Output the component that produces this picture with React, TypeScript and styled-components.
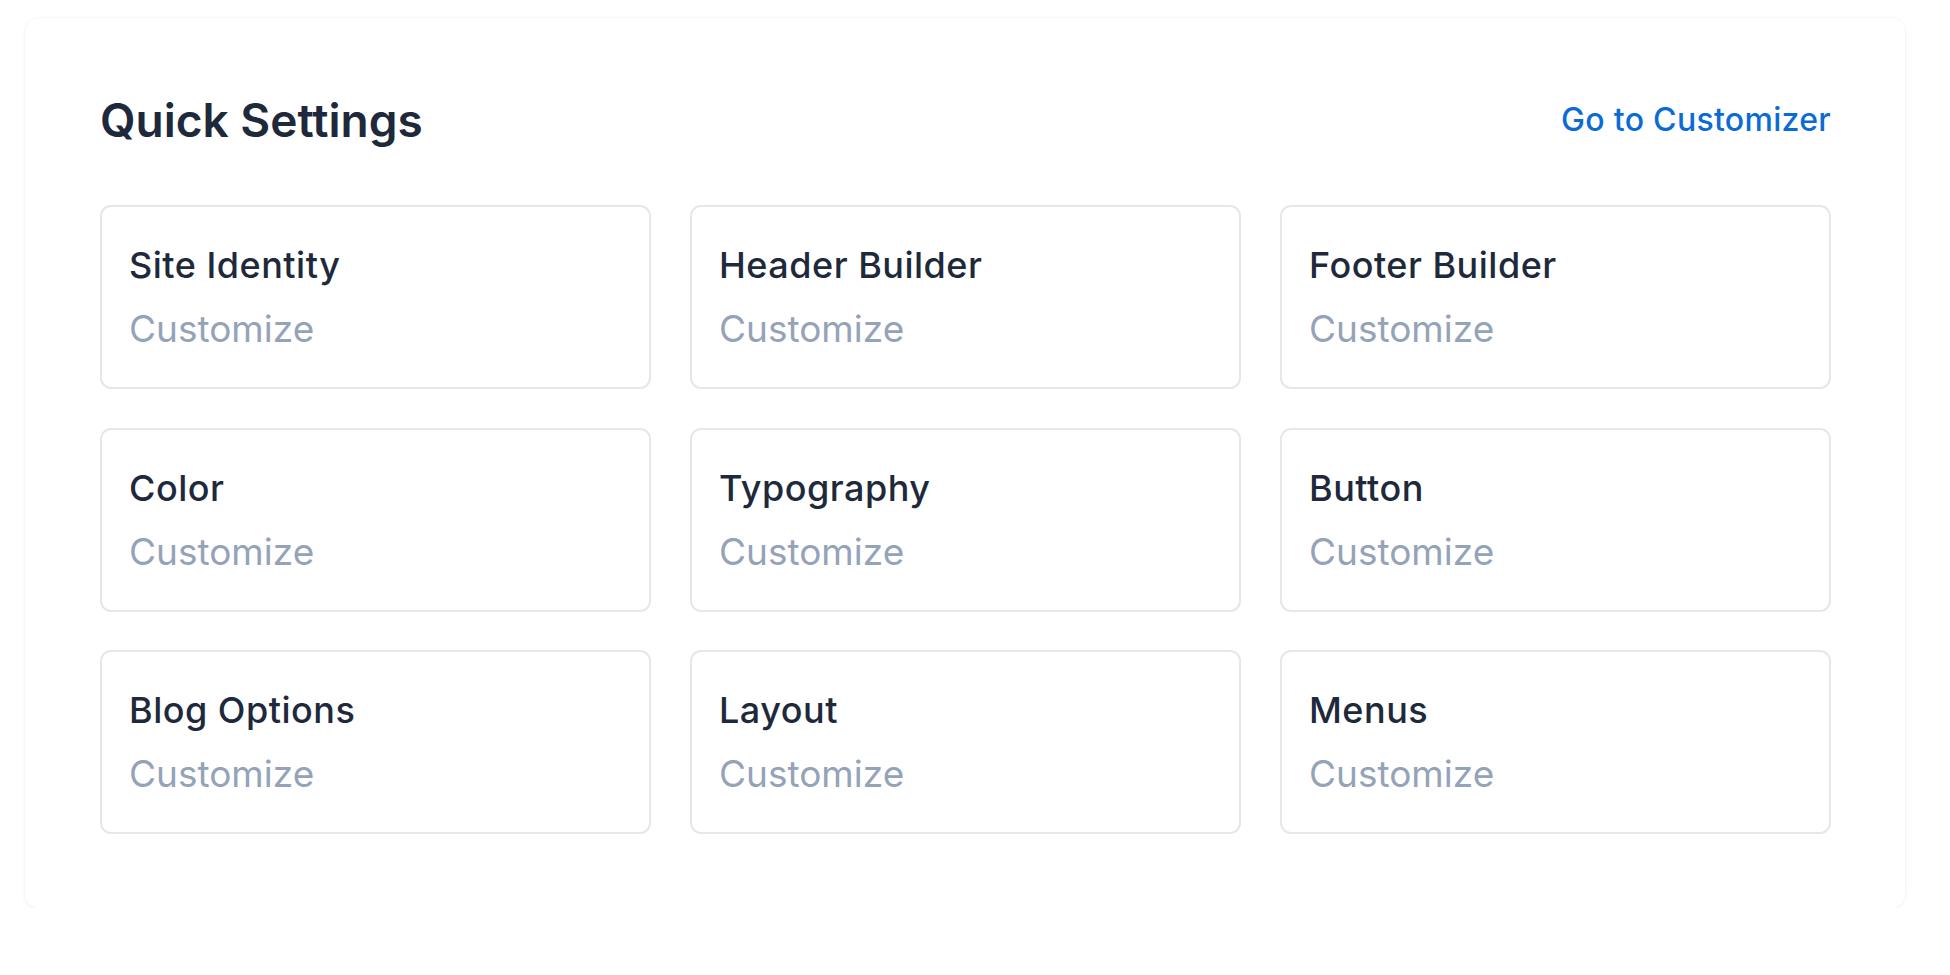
import React from "react";
import styled, { createGlobalStyle } from "styled-components";

const GlobalStyle = createGlobalStyle`
  * { box-sizing: border-box; }
  html, body {
    margin: 0;
    background: #ffffff;
    font-family: Inter, "Noto Sans", "Liberation Sans", sans-serif;
  }
  body { padding: 18px 45px 0 25px; }
`;

const Panel = styled.section`
  background: #ffffff;
  border-radius: 14px;
  box-shadow: 0 0 0 1px rgba(15, 23, 42, 0.025), 0 2px 6px rgba(15, 23, 42, 0.04);
  padding: 79px 74px 74px 75px;
`;

const Header = styled.header`
  display: flex;
  align-items: center;
  justify-content: space-between;
  height: 46px;
  margin-bottom: 62px;
`;

const Title = styled.h2`
  margin: 0;
  font-size: 46px;
  line-height: 46px;
  font-weight: 600;
  color: #1e293b;
`;

const CustomizerLink = styled.a`
  font-size: 32px;
  line-height: 32px;
  font-weight: 500;
  letter-spacing: 0.3px;
  color: #0b6bd6;
  text-decoration: none;
  cursor: pointer;
`;

const Grid = styled.div`
  display: grid;
  grid-template-columns: repeat(3, 1fr);
  column-gap: 39px;
  row-gap: 38.5px;
`;

const Card = styled.a`
  display: flex;
  flex-direction: column;
  gap: 27px;
  height: 184px;
  padding: 40px 27px 0;
  border: 2px solid #e4e7eb;
  border-radius: 11px;
  text-decoration: none;
  cursor: pointer;
`;

const CardTitle = styled.span`
  font-size: 36px;
  line-height: 36px;
  font-weight: 500;
  letter-spacing: 0.5px;
  color: #1e293b;
`;

const CardAction = styled.span`
  font-size: 37px;
  line-height: 37px;
  font-weight: 400;
  color: #94a3b8;
`;

const settings = [
  "Site Identity",
  "Header Builder",
  "Footer Builder",
  "Color",
  "Typography",
  "Button",
  "Blog Options",
  "Layout",
  "Menus",
];

export default function App() {
  return (
    <>
      <GlobalStyle />
      <Panel>
        <Header>
          <Title>Quick Settings</Title>
          <CustomizerLink>Go to Customizer</CustomizerLink>
        </Header>
        <Grid>
          {settings.map((name) => (
            <Card key={name}>
              <CardTitle>{name}</CardTitle>
              <CardAction>Customize</CardAction>
            </Card>
          ))}
        </Grid>
      </Panel>
    </>
  );
}
